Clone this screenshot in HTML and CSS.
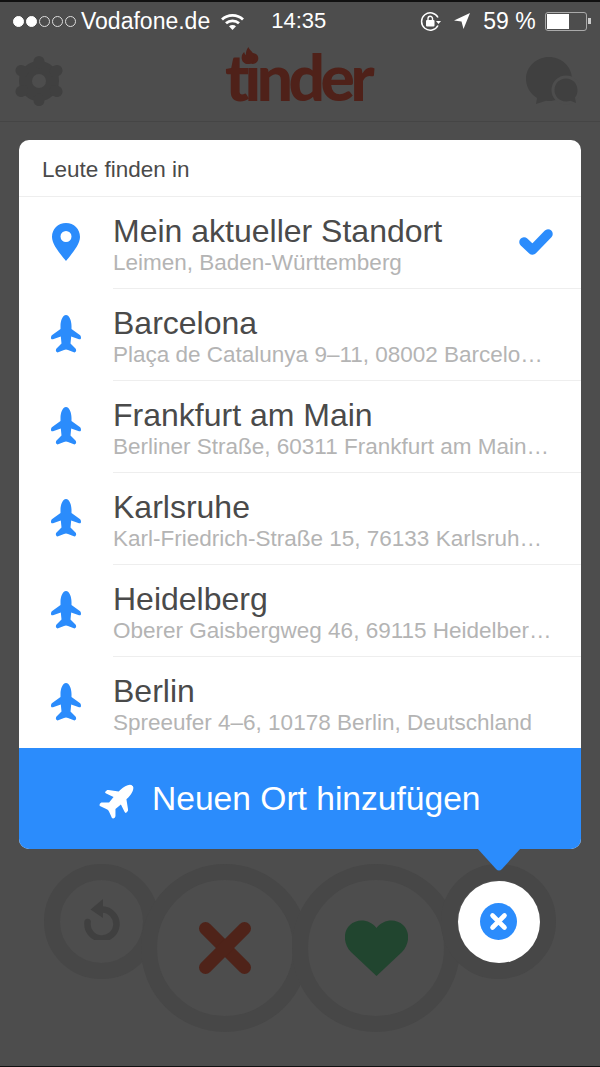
FILE: index.html
```html
<!DOCTYPE html>
<html>

<head>
  <meta charset="UTF-8" />
  <meta name="viewport" content="width=device-width, initial-scale=1.0" />
  <title>tinder location picker</title>
  <link rel="stylesheet" href="styles.css">
</head>

<body>
  <svg class='defs' width="0" height="0">
    <symbol id='plane' viewBox="0 0 30 38">
      <path d="M15 0C11.500 0 9.500 6 9.500 11V14L1.200 20C.3 20.700 0 21.500 0 23C0 24.300 1 24.600 2 24.200L9.800 21.500L10.500 28.500L5.500 33.500C4.500 34.500 4.500 37 6.500 37.500L13 35Q15 34 17 35L23.500 37.500C25.500 37 25.500 34.500 24.500 33.500L19.500 28.500L20.200 21.500L28 24.200C29 24.600 30 24.300 30 23C30 21.500 29.700 20.700 28.800 20L20.500 14V11C20.500 6 18.500 0 15 0Z" fill="currentColor"></path>
    </symbol>
  </svg>

  <div class='app'>
    <div class='statusbar'>
      <div class='signal'>
        <span class='dot on'></span><span class='dot on'></span><span class='dot'></span><span class='dot'></span><span class='dot'></span>
      </div>
      <span class='carrier'>Vodafone.de</span>
      <svg class='wifi' width="23" height="17" viewBox="0 0 23 17" fill="none" stroke="#fff" stroke-width="2.800">
        <path d="M1 6.500C6.800 1 16.200 1 22 6.500"></path>
        <path d="M5 10.200C8.500 7 14.500 7 18 10.200"></path>
        <path d="M11.500 17L8 13.300C10 11.700 13 11.700 15 13.300Z" fill="#fff" stroke="none"></path>
      </svg>
      <span class='time'>14:35</span>
      <svg class='rotlock' width="21" height="21" viewBox="0 0 21 21" fill="none">
        <path d="M18 6.500A8.700 8.700 0 1 0 18 14.500" stroke="#fff" stroke-width="1.500"></path>
        <path d="M16 10H21L18.500 13Z" fill="#fff"></path>
        <rect x="6" y="9" width="8.500" height="6.500" rx="1" fill="#fff"></rect>
        <path d="M8 9.500V7.500A2.200 2.200 0 0 1 12.500 7.500V9.500" stroke="#fff" stroke-width="1.400"></path>
      </svg>
      <svg class='locarrow' width="16" height="16" viewBox="0 0 16 16">
        <path d="M16 0L0 7.500L7.500 8.500L9.500 16Z" fill="#fff"></path>
      </svg>
      <span class='percent'>59 %</span>
      <div class='battery'>
        <div class='batteryLevel'></div>
      </div>
      <span class='batteryNub'></span>
    </div>

    <header class='nav'>
      <svg class='gear' width="50" height="50" viewBox="0 0 50 50" fill="none" stroke="#404040">
        <circle cx="25" cy="25" r="13.500" stroke-width="13"></circle>
        <g stroke-width="11" stroke-linecap="round">
          <path d="M25 7V5.500"></path>
          <path d="M25 43V44.500"></path>
          <path d="M9 15.500L7 14.500"></path>
          <path d="M41 15.500L43 14.500"></path>
          <path d="M9 34.500L7 35.500"></path>
          <path d="M41 34.500L43 35.500"></path>
        </g>
      </svg>
      <div class='logo'>
        <svg class='flame' width="14" height="17" viewBox="0 0 15 20">
          <path d="M8 0C9 4 15 6 15 12.500C15 17 11.500 20 7.500 20C3.500 20 0 17 0 12.500C0 9.500 1.500 7.500 3 6C3.500 8 4 9 5 9.500C5 6 5.500 3 8 0Z" fill="#4f2119"></path>
        </svg>
        <span>tinder</span>
      </div>
      <svg class='chat' width="53" height="48" viewBox="0 0 53 48">
        <path d="M23 0C10.300 0 0 9.800 0 22C0 30 4.500 37 11 41L10 47L20 43.700C21 43.900 22 44 23 44C35.700 44 46 34.200 46 22C46 9.800 35.700 0 23 0Z" fill="#404040"></path>
        <circle cx="40" cy="33" r="14.500" fill="#4d4d4d"></circle>
        <path d="M40 21.500C33.600 21.500 28.500 26.500 28.500 33C28.500 39.500 33.600 44.500 40 44.500C41.500 44.500 43 44.200 44.300 43.700L50 46L49 40.500C50.700 38.500 51.500 36 51.500 33C51.500 26.500 46.400 21.500 40 21.500Z" fill="#404040"></path>
      </svg>
    </header>

    <div class='actions'>
      <div class='ring small'>
        <svg class='undo' width="36" height="41" viewBox="0 0 36 41" fill="none">
          <path d="M18.500 10.500A14.500 14.500 0 1 1 3.600 23" stroke="#404040" stroke-width="6.500" stroke-linecap="round"></path>
          <path d="M19 0V19L6.500 10.500Z" fill="#404040"></path>
        </svg>
      </div>
      <div class='ring big'>
        <svg width="52" height="52" viewBox="0 0 52 52" fill="none" stroke="#4f2319" stroke-width="13" stroke-linecap="round">
          <path d="M6.500 6.500L45.500 45.500"></path>
          <path d="M45.500 6.500L6.500 45.500"></path>
        </svg>
      </div>
      <div class='ring big'>
        <svg width="63" height="56" viewBox="0 0 63 56">
          <path d="M31.500 56L6 32C-2 24-2 11 5 5C12-2 25-1 31.500 8C38-1 51-2 58 5C65 11 65 24 57 32Z" fill="#21452f"></path>
        </svg>
      </div>
      <div class='ring small last'>
        <div class='closeBtn'>
          <svg width="37" height="37" viewBox="0 0 37 37">
            <circle cx="18.500" cy="18.500" r="18.500" fill="#2b8cfc"></circle>
            <path d="M12.500 12.500L24.500 24.500M24.500 12.500L12.500 24.500" stroke="#fff" stroke-width="4.600" stroke-linecap="round"></path>
          </svg>
        </div>
      </div>
    </div>

    <div class='popup'>
      <div class='popupHeader'>Leute finden in</div>

      <div class='place'>
        <div class='placeIcon'>
          <svg width="28" height="38" viewBox="0 0 28 38">
            <path fill-rule="evenodd" d="M14 0C6 0 0 6 0 14C0 22 10 33 14 38C18 33 28 22 28 14C28 6 22 0 14 0ZM14 8A5.500 5.500 0 1 1 14 19A5.500 5.500 0 1 1 14 8Z" fill="#2b8cfc"></path>
          </svg>
        </div>
        <div class='placeText'>
          <div class='placeName'>Mein aktueller Standort</div>
          <div class='placeAddr'>Leimen, Baden-Württemberg</div>
        </div>
        <svg class='check' width="34" height="26" viewBox="0 0 34 26" fill="none">
          <path d="M5 13L13.500 21L29 5" stroke="#2b8cfc" stroke-width="9.500" stroke-linecap="round" stroke-linejoin="round"></path>
        </svg>
      </div>

      <div class='place'>
        <div class='placeIcon'><svg class='planeIcon' width="30" height="38"><use href="#plane"></use></svg></div>
        <div class='placeText'>
          <div class='placeName'>Barcelona</div>
          <div class='placeAddr'>Plaça de Catalunya 9–11, 08002 Barcelo…</div>
        </div>
      </div>

      <div class='place'>
        <div class='placeIcon'><svg class='planeIcon' width="30" height="38"><use href="#plane"></use></svg></div>
        <div class='placeText'>
          <div class='placeName'>Frankfurt am Main</div>
          <div class='placeAddr'>Berliner Straße, 60311 Frankfurt am Main…</div>
        </div>
      </div>

      <div class='place'>
        <div class='placeIcon'><svg class='planeIcon' width="30" height="38"><use href="#plane"></use></svg></div>
        <div class='placeText'>
          <div class='placeName'>Karlsruhe</div>
          <div class='placeAddr'>Karl-Friedrich-Straße 15, 76133 Karlsruh…</div>
        </div>
      </div>

      <div class='place'>
        <div class='placeIcon'><svg class='planeIcon' width="30" height="38"><use href="#plane"></use></svg></div>
        <div class='placeText'>
          <div class='placeName'>Heidelberg</div>
          <div class='placeAddr'>Oberer Gaisbergweg 46, 69115 Heidelber…</div>
        </div>
      </div>

      <div class='place lastPlace'>
        <div class='placeIcon'><svg class='planeIcon' width="30" height="38"><use href="#plane"></use></svg></div>
        <div class='placeText'>
          <div class='placeName'>Berlin</div>
          <div class='placeAddr'>Spreeufer 4–6, 10178 Berlin, Deutschland</div>
        </div>
      </div>

      <div class='addPlace'>
        <svg class='addIcon' width="30" height="38"><use href="#plane"></use></svg>
        <span>Neuen Ort hinzufügen</span>
      </div>

      <svg class='pointer' width="44" height="23" viewBox="0 0 44 23">
        <path d="M0 0H44L25 21Q22 24 19 21Z" fill="#2b8cfc"></path>
      </svg>
    </div>
  </div>
</body>

</html>
```

FILE: styles.css
```css
* {
  box-sizing: border-box;
}

body {
  margin: 0;
  background-color: #4d4d4d;
  font-family: "Liberation Sans", Arial, sans-serif;
  overflow: hidden;
}

.defs {
  display: block;
  height: 0;
}

.app {
  position: relative;
  height: 1067px;
  display: flex;
  flex-direction: column;
  border-top: 2px solid #111;
  border-bottom: 1px solid #111;
  background-color: #4d4d4d;
}

.statusbar {
  height: 38px;
  padding-left: 13px;
  display: flex;
  align-items: center;
  color: #fff;
  font-size: 23px;
}

.signal {
  display: flex;
  gap: 2px;
}

.dot {
  width: 11px;
  height: 11px;
  border: 1px solid #ddd;
  border-radius: 50%;
}

.dot.on {
  background-color: #fff;
  border-color: #fff;
}

.carrier {
  margin-left: 5px;
}

.wifi {
  margin-left: 11px;
}

.time {
  margin-left: 27px;
  font-size: 22px;
}

.rotlock {
  margin-left: 94px;
}

.locarrow {
  margin-left: 13px;
}

.percent {
  margin-left: 13px;
}

.battery {
  width: 42px;
  height: 19px;
  margin-left: 9px;
  padding: 1px;
  border: 1.5px solid #aaa;
  border-radius: 3px;
}

.batteryLevel {
  width: 59%;
  height: 100%;
  background-color: #fff;
}

.batteryNub {
  width: 3px;
  height: 6px;
  margin-left: 1px;
  background-color: #ccc;
}

.nav {
  height: 82px;
  padding: 0 21px 0 14px;
  display: flex;
  justify-content: space-between;
  align-items: center;
  border-bottom: 1px solid #454545;
}

.gear {
  margin-top: 1px;
}

.logo {
  position: relative;
  margin: 0 0 8px 5px;
  color: #4f2119;
  font-family: Lato, sans-serif;
  font-size: 64px;
  font-weight: 900;
  line-height: 64px;
  letter-spacing: -4.5px;
}

.flame {
  position: absolute;
  top: 2px;
  left: 16px;
}

.actions {
  margin-top: auto;
  padding: 0 0 34px 44px;
  display: flex;
  align-items: flex-start;
}

.ring {
  display: flex;
  justify-content: center;
  align-items: center;
  border: 16px solid #474747;
  border-radius: 50%;
  flex-shrink: 0;
}

.ring.small {
  width: 115px;
  height: 115px;
}

.ring.big {
  width: 168px;
  height: 168px;
  margin-left: -18px;
  background-color: #4d4d4d;
}

.ring.big + .ring.big {
  margin-left: -17px;
}

.ring.last {
  margin-left: -19px;
}

.undo {
  margin-top: -4px;
}

.closeBtn {
  width: 82px;
  height: 82px;
  display: flex;
  justify-content: center;
  align-items: center;
  flex-shrink: 0;
  border-radius: 50%;
  background-color: #fff;
}

.popup {
  position: absolute;
  top: 138px;
  left: 19px;
  width: 562px;
  border-radius: 10px;
  background-color: #fff;
}

.popupHeader {
  height: 57px;
  padding: 3px 0 0 23px;
  display: flex;
  align-items: center;
  border-bottom: 1px solid #eee;
  color: #4a4a4a;
  font-size: 22.5px;
}

.place {
  position: relative;
  height: 92px;
  display: flex;
  align-items: stretch;
}

.lastPlace {
  height: 91px;
}

.placeIcon {
  width: 94px;
  display: flex;
  justify-content: center;
  align-items: center;
  padding: 0 1px 2px 0;
  flex-shrink: 0;
}

.planeIcon {
  color: #2b8cfc;
}

.placeText {
  flex: 1;
  padding-top: 15px;
  border-bottom: 1px solid #eee;
  white-space: nowrap;
  overflow: hidden;
}

.lastPlace .placeText {
  border-bottom: none;
}

.placeName {
  color: #4a4a4a;
  font-size: 32px;
  line-height: 38px;
}

.placeAddr {
  color: #b4b4b4;
  font-size: 22.5px;
  line-height: 26px;
}

.check {
  position: absolute;
  top: 32px;
  right: 28px;
}

.addPlace {
  height: 101px;
  padding-left: 81px;
  display: flex;
  align-items: center;
  gap: 18px;
  border-radius: 0 0 10px 10px;
  background-color: #2b8cfc;
  color: #fff;
  font-size: 33.6px;
}

.addIcon {
  margin-left: 4px;
  transform: rotate(45deg);
  color: #fff;
}

.pointer {
  position: absolute;
  bottom: -22px;
  left: 458px;
}
```
